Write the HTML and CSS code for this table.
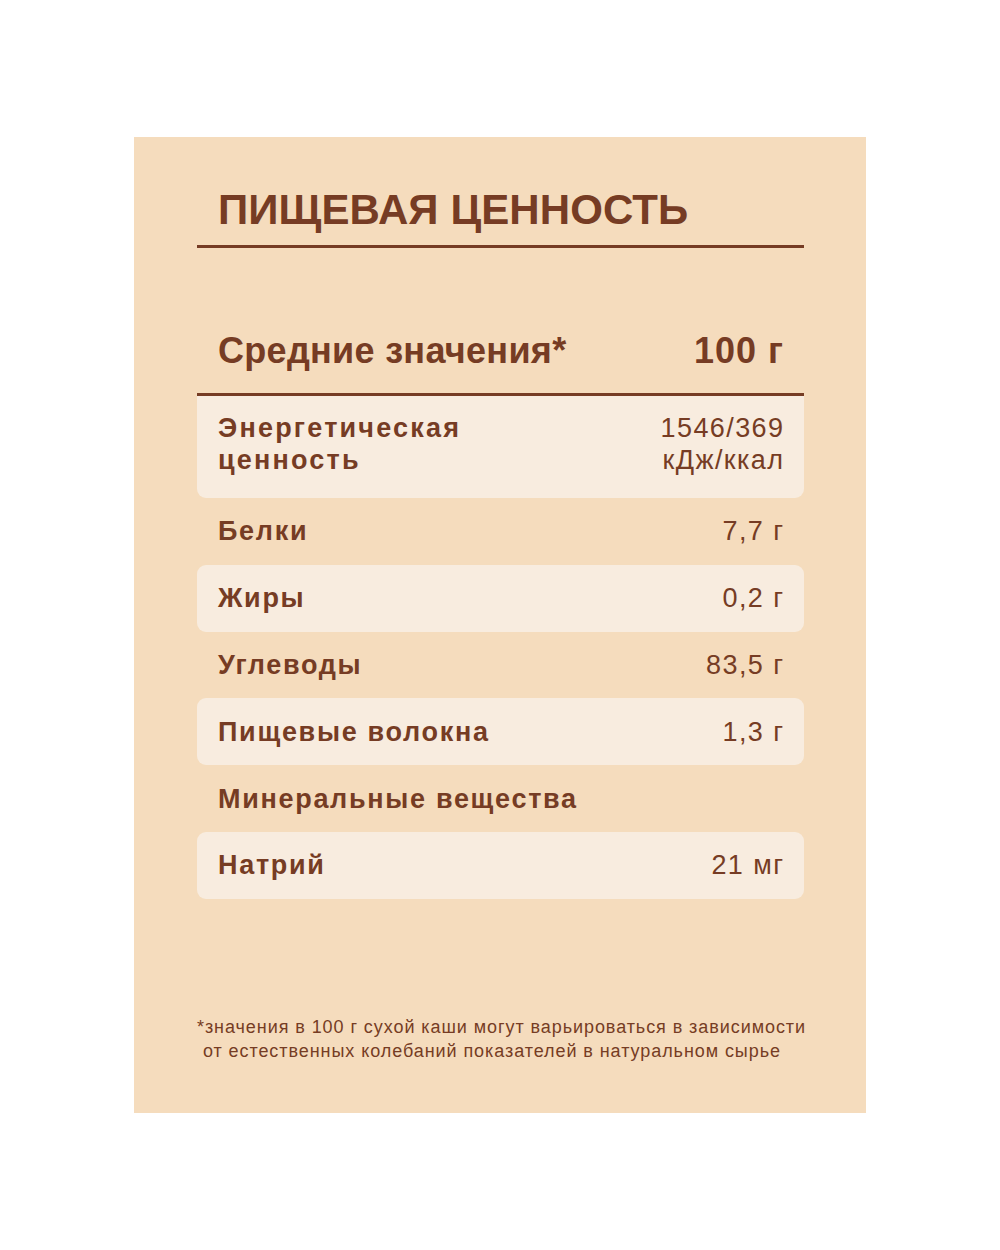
FILE: index.html
```html
<!DOCTYPE html>
<html lang="ru">
<head>
<meta charset="utf-8">
<title>Пищевая ценность</title>
<link rel="stylesheet" href="styles.css">
</head>
<body>
<div class="card">
  <h1 class="title">ПИЩЕВАЯ ЦЕННОСТЬ</h1>
  <div class="head-row">
    <span class="head-label">Средние значения*</span>
    <span class="head-value">100 г</span>
  </div>
  <div class="rows">
    <div class="row row-energy shaded">
      <span class="label label-energy">Энергетическая<br>ценность</span>
      <span class="value">1546/369<br>кДж/ккал</span>
    </div>
    <div class="row">
      <span class="label">Белки</span>
      <span class="value">7,7 г</span>
    </div>
    <div class="row shaded">
      <span class="label">Жиры</span>
      <span class="value">0,2 г</span>
    </div>
    <div class="row">
      <span class="label">Углеводы</span>
      <span class="value">83,5 г</span>
    </div>
    <div class="row shaded">
      <span class="label">Пищевые волокна</span>
      <span class="value">1,3 г</span>
    </div>
    <div class="row">
      <span class="label">Минеральные вещества</span>
    </div>
    <div class="row shaded">
      <span class="label">Натрий</span>
      <span class="value">21 мг</span>
    </div>
  </div>
  <p class="note">*значения в 100 г сухой каши могут варьироваться в зависимости<br>&nbsp;от естественных колебаний показателей в натуральном сырье</p>
</div>
</body>
</html>
```

FILE: styles.css
```css
html, body {
  margin: 0;
  padding: 0;
  background: #ffffff;
}

body {
  font-family: "Liberation Sans", Arial, sans-serif;
  color: #763c24;
}

.card {
  box-sizing: border-box;
  width: 732px;
  height: 976px;
  margin: 137px 0 0 134px;
  padding: 49px 62px 0 63px;
  background: #f5dcbd;
  display: flex;
  flex-direction: column;
}

.title {
  margin: 0;
  padding: 0 0 11px 21px;
  font-size: 42px;
  line-height: 48px;
  font-weight: 700;
  letter-spacing: 0.1px;
  border-bottom: 3px solid #763c24;
}

.head-row {
  margin-top: 82px;
  padding: 0 21px 21px 21px;
  display: flex;
  justify-content: space-between;
  align-items: center;
  font-size: 36px;
  line-height: 42px;
  font-weight: 700;
  letter-spacing: 0.3px;
  border-bottom: 3px solid #763c24;
}

.head-value {
  letter-spacing: 1px;
  margin-right: -1px;
}

.rows {
  display: flex;
  flex-direction: column;
}

.row {
  box-sizing: border-box;
  height: 66.8px;
  padding: 0 21px;
  display: flex;
  justify-content: space-between;
  align-items: center;
  font-size: 27px;
  line-height: 32px;
}

.row-energy {
  height: 102px;
  padding-bottom: 6px;
}

.shaded {
  background: #f8ecdf;
  border-radius: 9px;
}

.row-energy.shaded {
  border-radius: 0 0 9px 9px;
}

.label {
  font-weight: 700;
  letter-spacing: 1.7px;
}

.label-energy {
  letter-spacing: 2.2px;
}

.value {
  font-weight: 400;
  text-align: right;
  letter-spacing: 1.4px;
  margin-right: -1.4px;
}

.note {
  margin: 116px -10px 0 0;
  font-size: 18px;
  line-height: 24px;
  letter-spacing: 0.93px;
  white-space: nowrap;
}
```
